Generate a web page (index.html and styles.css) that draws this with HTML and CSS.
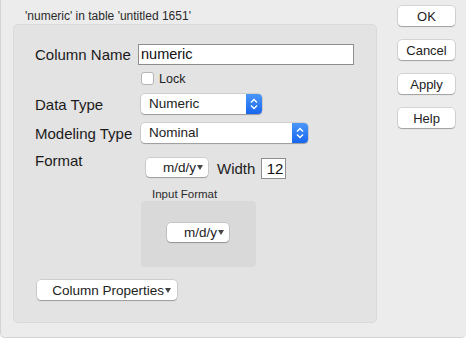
FILE: index.html
```html
<!DOCTYPE html>
<html lang="en">
<head>
    <meta charset="UTF-8">
    <title>Column Info</title>
    <link rel="stylesheet" href="styles.css">
</head>
<body>
    <div class="window">
        <div class="main">
            <div class="title">'numeric' in table 'untitled 1651'</div>
            <div class="group">
                <div class="row">
                    <span class="label name-label">Column Name</span>
                    <div class="text-field name-field">numeric</div>
                </div>
                <div class="lock-row">
                    <span class="checkbox"></span>
                    <span class="lock-text">Lock</span>
                </div>
                <div class="row select-row">
                    <span class="label select-label">Data Type</span>
                    <div class="select data-select">
                        <span class="select-text">Numeric</span>
                        <span class="stepper">
                            <svg width="16" height="20" viewBox="0 0 16 20"><path d="M5 8.5 L8 5.5 L11 8.5 M5 11.5 L8 14.5 L11 11.5" fill="none" stroke="#fff" stroke-width="1.4"/></svg>
                        </span>
                    </div>
                </div>
                <div class="row select-row">
                    <span class="label select-label">Modeling Type</span>
                    <div class="select model-select">
                        <span class="select-text">Nominal</span>
                        <span class="stepper">
                            <svg width="16" height="20" viewBox="0 0 16 20"><path d="M5 8.5 L8 5.5 L11 8.5 M5 11.5 L8 14.5 L11 11.5" fill="none" stroke="#fff" stroke-width="1.4"/></svg>
                        </span>
                    </div>
                </div>
                <div class="format-row">
                    <span class="label format-label">Format</span>
                    <div class="format-controls">
                        <div class="menu format-menu">m/d/y<span class="arrow"></span></div>
                        <span class="width-label">Width</span>
                        <div class="text-field width-field">12</div>
                    </div>
                </div>
                <div class="input-format">
                    <div class="input-format-title">Input Format</div>
                    <div class="input-format-box">
                        <div class="menu format-menu">m/d/y<span class="arrow"></span></div>
                    </div>
                </div>
                <div class="menu props-menu">Column Properties<span class="arrow"></span></div>
            </div>
        </div>
        <div class="side">
            <button class="btn">OK</button>
            <button class="btn">Cancel</button>
            <button class="btn">Apply</button>
            <button class="btn">Help</button>
        </div>
    </div>
</body>
</html>
```

FILE: styles.css
```css
body {
    margin: 0;
    background: #ffffff;
    font-family: 'Liberation Sans', Arial, sans-serif;
    color: #222;
}
.window {
    display: flex;
    width: 466px;
    height: 338px;
    box-sizing: border-box;
    background: #ececec;
    border-left: 1px solid #d4d4d4;
    border-bottom: 1px solid #d4d4d4;
    border-bottom-left-radius: 5px;
    border-bottom-right-radius: 5px;
}
.main {
    margin-left: 12px;
    width: 364px;
}
.title {
    height: 15px;
    padding: 9px 0 0 12px;
    font-size: 12px;
    line-height: 15px;
    color: #2a2a2a;
}
.group {
    height: 299px;
    box-sizing: border-box;
    background: #e3e3e3;
    border: 1px solid #dadada;
    border-radius: 5px;
    padding: 19px 0 0 21px;
}
.row {
    display: flex;
    align-items: center;
}
.label {
    font-size: 15px;
    color: #1a1a1a;
}
.name-label {
    width: 103px;
}
.text-field {
    background: #fff;
    border: 1px solid #8e8e8e;
    box-sizing: border-box;
    height: 21px;
    line-height: 19px;
    font-size: 14.5px;
    color: #111;
}
.name-field {
    width: 216px;
    padding-left: 2px;
}
.lock-row {
    display: flex;
    align-items: center;
    margin-top: 7px;
    padding-left: 106px;
    height: 13px;
}
.checkbox {
    width: 13px;
    height: 13px;
    box-sizing: border-box;
    background: #fff;
    border: 1px solid #b4b4b4;
    border-radius: 3px;
}
.lock-text {
    margin-left: 5px;
    font-size: 12.5px;
}
.select-row {
    margin-top: 9px;
}
.select-label {
    width: 106px;
}
.select {
    display: flex;
    height: 20px;
    background: #fff;
    border-radius: 4px;
    box-shadow: 0 0 0 0.5px rgba(0, 0, 0, 0.18), 0 1px 1px rgba(0, 0, 0, 0.25);
    overflow: hidden;
}
.select-text {
    flex: 1;
    padding-left: 8px;
    font-size: 13.5px;
    line-height: 20px;
}
.stepper {
    width: 16px;
    height: 20px;
    background: linear-gradient(#4a97f9, #1866ee);
}
.stepper svg {
    display: block;
}
.data-select {
    width: 121px;
}
.model-select {
    width: 167px;
}
.format-row {
    display: flex;
    align-items: flex-start;
    margin-top: 9px;
}
.format-label {
    width: 111px;
    line-height: 17px;
}
.format-controls {
    display: flex;
    align-items: flex-start;
    margin-top: 6px;
}
.menu {
    display: flex;
    align-items: center;
    justify-content: flex-end;
    box-sizing: border-box;
    height: 20px;
    padding-right: 5px;
    background: #fff;
    border-radius: 4px;
    box-shadow: 0 0 0 0.5px rgba(0, 0, 0, 0.18), 0 1px 1px rgba(0, 0, 0, 0.25);
    font-size: 13.5px;
}
.arrow {
    width: 0;
    height: 0;
    margin-left: 1px;
    border-left: 3.5px solid transparent;
    border-right: 3.5px solid transparent;
    border-top: 5px solid #444;
}
.format-menu {
    width: 62px;
    height: 19px;
}
.width-label {
    margin-left: 9px;
    font-size: 15px;
    line-height: 21px;
}
.width-field {
    width: 25px;
    margin-left: 6px;
    padding-right: 2px;
    text-align: right;
    font-size: 15px;
}
.input-format {
    margin-top: 8px;
    margin-left: 106px;
}
.input-format-title {
    padding-left: 11px;
    font-size: 11.5px;
    line-height: 14px;
    color: #2a2a2a;
}
.input-format-box {
    display: flex;
    width: 115px;
    height: 66px;
    box-sizing: border-box;
    padding: 22px 0 0 26px;
    background: #d9d9d9;
    border-radius: 4px;
}
.props-menu {
    width: 140px;
    margin-top: 13px;
    margin-left: 2px;
    padding-right: 6px;
}
.side {
    display: flex;
    flex-direction: column;
    gap: 14px;
    margin-left: 21px;
    padding-top: 6px;
}
.btn {
    width: 57px;
    height: 20px;
    padding: 0;
    background: #fff;
    border: none;
    border-radius: 4px;
    box-shadow: 0 0 0 0.5px rgba(0, 0, 0, 0.2), 0 1px 1px rgba(0, 0, 0, 0.25);
    font-family: 'Liberation Sans', Arial, sans-serif;
    font-size: 13px;
    color: #222;
}
```
